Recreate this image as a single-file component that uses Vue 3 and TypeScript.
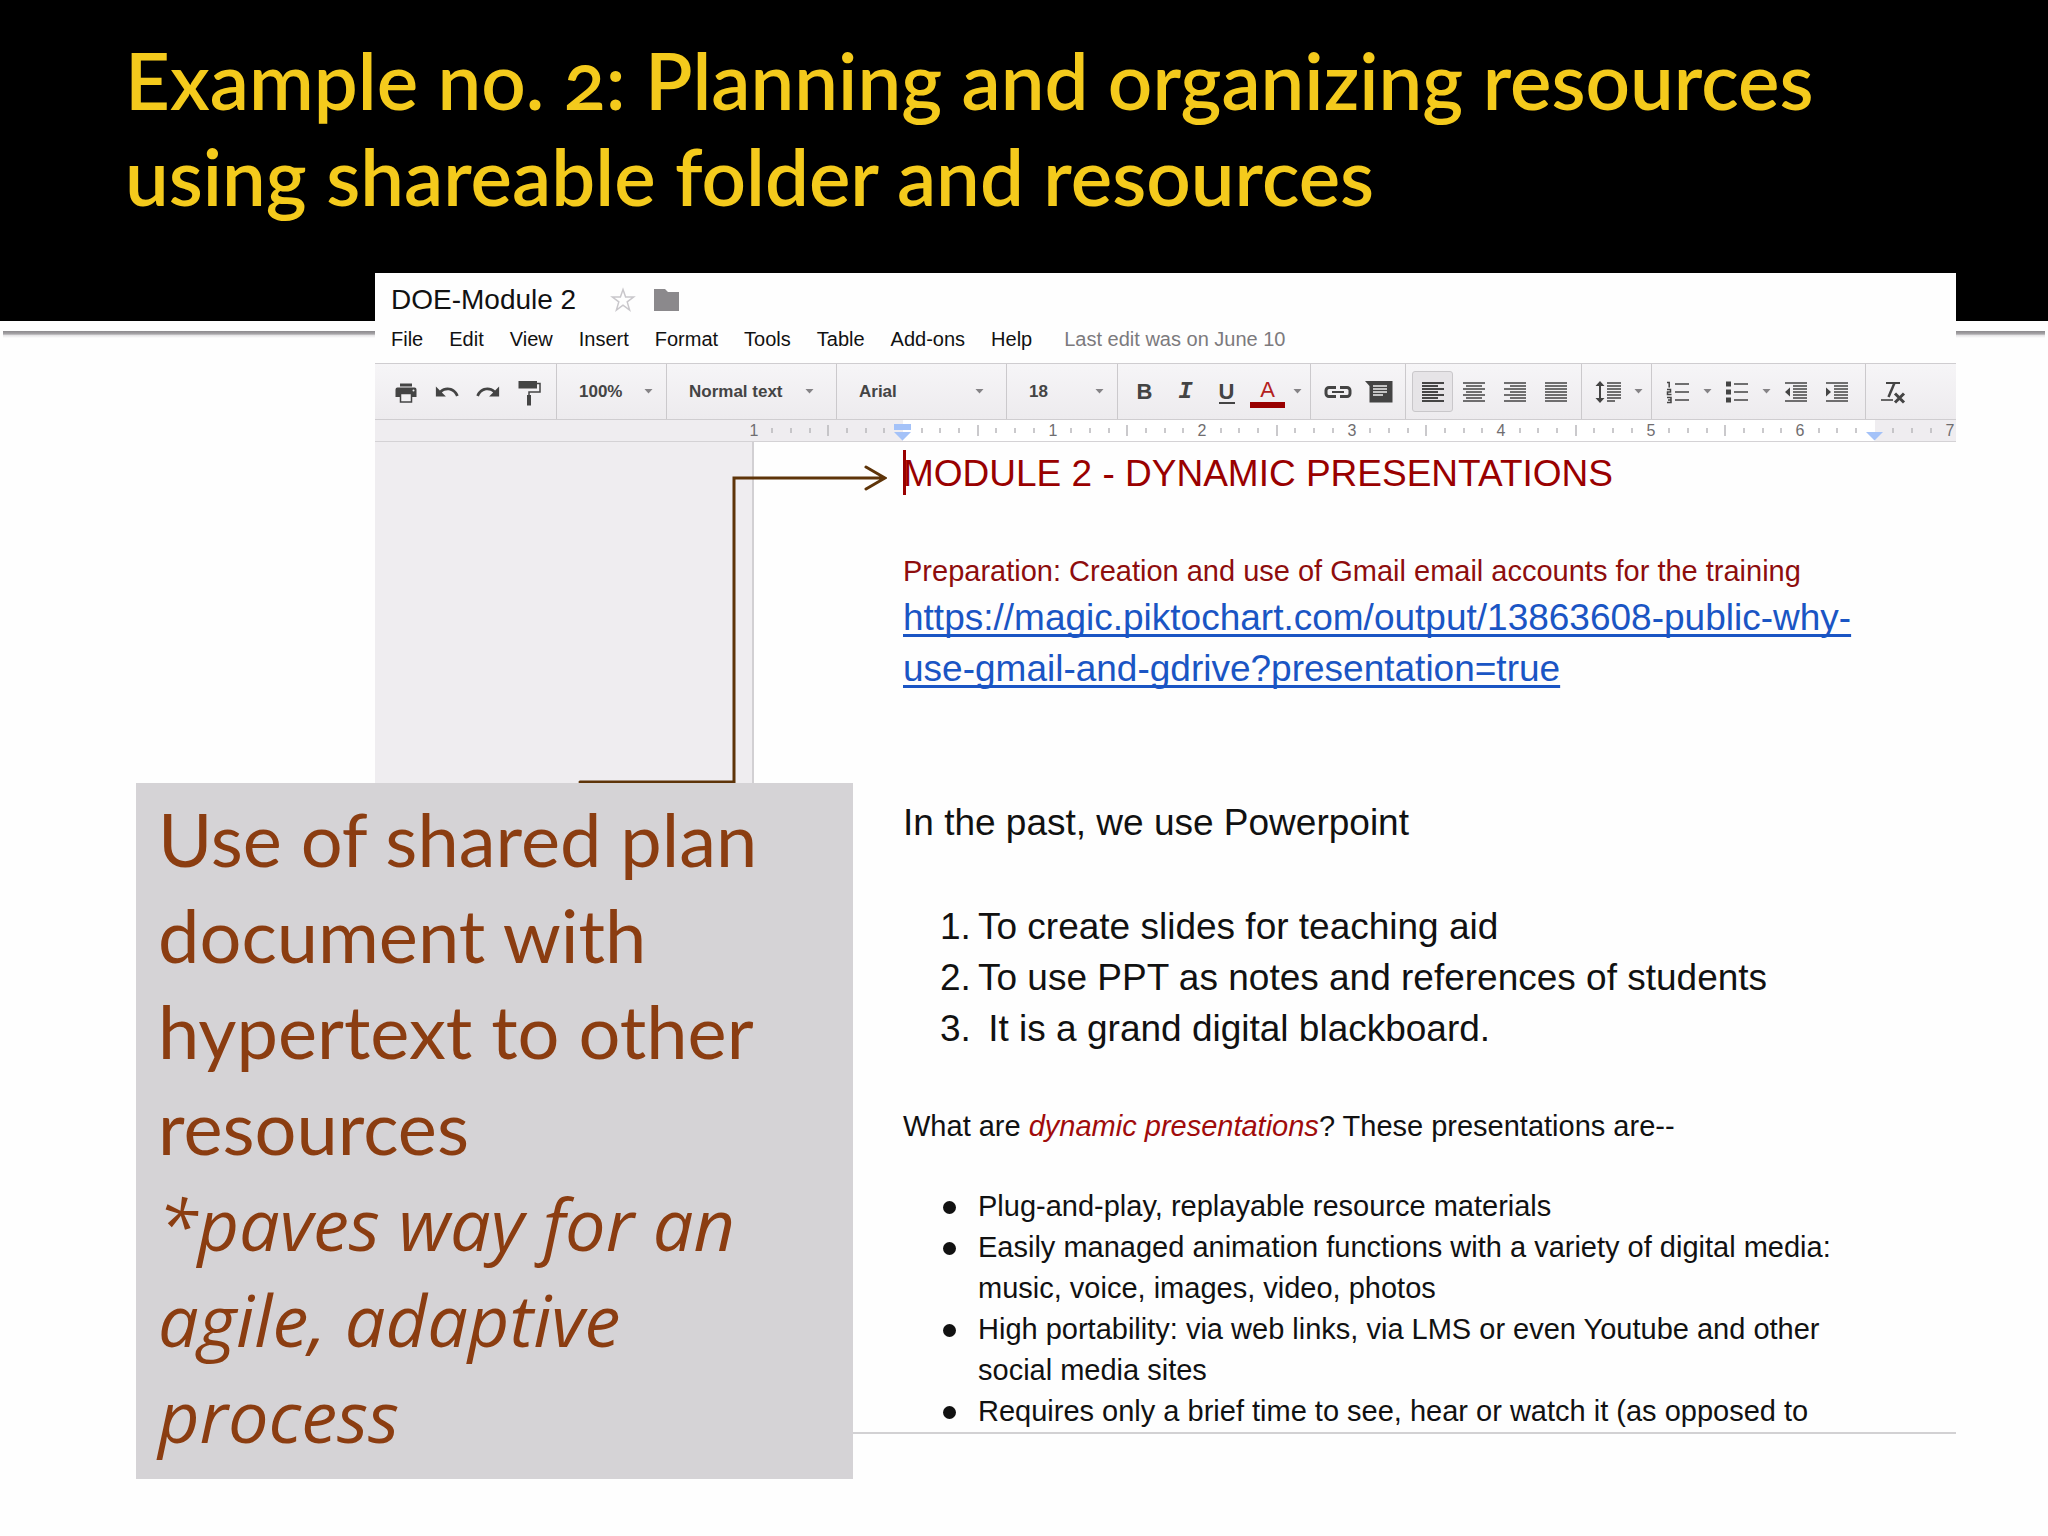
<script setup lang="ts">
const menus: string[] = ['File', 'Edit', 'View', 'Insert', 'Format', 'Tools', 'Table', 'Add-ons', 'Help']

interface Tick { x: number; kind: 'minor' | 'half' | 'label'; label: string }

// Ruler: one inch is 299/2 px wide, split in eighths; zero sits at the left text margin.
const zero = 528
const ticks: Tick[] = []
for (let i = -8; i <= 56; i++) {
  if (i === 0 || i === 52) continue
  const x = Math.round(zero + (i * 299) / 16)
  if (i % 8 === 0) ticks.push({ x, kind: 'label', label: String(Math.abs(i / 8)) })
  else if (i % 4 === 0) ticks.push({ x, kind: 'half', label: '' })
  else ticks.push({ x, kind: 'minor', label: '' })
}

type Align = 'left' | 'center' | 'right' | 'justify'
const aligns: Align[] = ['left', 'center', 'right', 'justify']
function alignPath(kind: Align): string {
  return [0, 1, 2, 3, 4, 5, 6]
    .map((i) => {
      const y = 6 + i * 3
      const short = i % 2 === 1 && kind !== 'justify'
      if (!short) return `M4 ${y}H26`
      if (kind === 'left') return `M4 ${y}H20`
      if (kind === 'right') return `M10 ${y}H26`
      return `M7 ${y}H23`
    })
    .join('')
}

const steps: string[] = [
  'To create slides for teaching aid',
  'To use PPT as notes and references of students',
  '\u00a0It is a grand digital blackboard.',
]
const traits: string[] = [
  'Plug-and-play, replayable resource materials',
  'Easily managed animation functions with a variety of digital media: music, voice, images, video, photos',
  'High portability: via web links, via LMS or even Youtube and other social media sites',
  'Requires only a brief time to see, hear or watch it (as opposed to',
]
</script>

<template>
  <main class="slide">
    <header class="banner">
      <h1>Example no. 2: Planning and organizing resources using shareable folder and resources</h1>
    </header>
    <div class="rule"></div>

    <section class="doc">
      <div class="doc-title">
        <span>DOE-Module 2</span>
        <button type="button" class="plain star" aria-label="Star">
          <svg width="26" height="26" viewBox="0 0 26 26"><path d="M13 2.5l2.6 7.6h8l-6.4 4.8 2.4 8.2-6.600-4.900-6.600 4.900 2.400-8.200L2.400 10.100h8z" fill="none" stroke="#c9c7cb" stroke-width="1.500" /></svg>
        </button>
        <button type="button" class="plain" aria-label="Move to folder">
          <svg width="26" height="24" viewBox="0 0 26 24"><path d="M0 1h11l3 3h11v19H0z" fill="#8b898c" /></svg>
        </button>
      </div>

      <nav class="menu">
        <button v-for="m in menus" :key="m" type="button" class="plain">{{ m }}</button>
        <span class="edited">Last edit was on June 10</span>
      </nav>

      <div class="toolbar">
        <div class="group history">
          <button type="button" class="tool" aria-label="Print">
            <svg viewBox="0 0 30 30"><path d="M9 6.500h12v3H9zM6.500 10.500h17a2 2 0 0 1 2 2v7.500h-21v-7.500a2 2 0 0 1 2-2z" fill="#444" /><path d="M9.500 16.500h11v8.500h-11z" fill="#f2f1f3" stroke="#444" stroke-width="1.500" /><circle cx="22.500" cy="13.500" r="1" fill="#eee" /></svg>
          </button>
          <button type="button" class="tool" aria-label="Undo">
            <svg viewBox="-1.500 -1.500 27 27"><path fill="#444" d="M12.500 8c-2.650 0-5.050.990-6.900 2.600L2 7v9h9l-3.620-3.620c1.390-1.160 3.160-1.880 5.120-1.880 3.540 0 6.550 2.310 7.600 5.500l2.370-.780C21.080 11.030 17.150 8 12.500 8z" /></svg>
          </button>
          <button type="button" class="tool" aria-label="Redo">
            <svg viewBox="-1.500 -1.500 27 27"><path fill="#444" d="M18.400 10.600C16.550 8.990 14.150 8 11.500 8c-4.650 0-8.580 3.030-9.960 7.220L3.900 16c1.050-3.190 4.050-5.500 7.600-5.500 1.950 0 3.730.720 5.120 1.880L13 16h9V7l-3.600 3.600z" /></svg>
          </button>
          <button type="button" class="tool" aria-label="Paint format">
            <svg viewBox="0 0 30 30"><path d="M4.500 4h18.500v7.500H4.500zM13 18h4v10.500h-4z" fill="#444" /><path d="M23 6.500h3v8.500H15v3" fill="none" stroke="#444" stroke-width="1.500" /></svg>
          </button>
        </div>

        <label class="group pick zoom">
          <select aria-label="Zoom"><option>100%</option></select>
          <svg class="caret" viewBox="0 0 8 5"><path d="M0 0h8L4 4.500z" /></svg>
        </label>
        <label class="group pick style">
          <select aria-label="Styles"><option>Normal text</option></select>
          <svg class="caret" viewBox="0 0 8 5"><path d="M0 0h8L4 4.500z" /></svg>
        </label>
        <label class="group pick font">
          <select aria-label="Font"><option>Arial</option></select>
          <svg class="caret" viewBox="0 0 8 5"><path d="M0 0h8L4 4.500z" /></svg>
        </label>
        <label class="group pick size">
          <select aria-label="Font size"><option>18</option></select>
          <svg class="caret" viewBox="0 0 8 5"><path d="M0 0h8L4 4.500z" /></svg>
        </label>

        <div class="group format">
          <button type="button" class="tool glyph bold">B</button>
          <button type="button" class="tool glyph italic">I</button>
          <button type="button" class="tool glyph underline"><span>U</span></button>
          <button type="button" class="tool glyph color"><span>A</span></button>
          <button type="button" class="more" aria-label="Text color options"><svg class="caret" viewBox="0 0 8 5"><path d="M0 0h8L4 4.500z" /></svg></button>
        </div>

        <div class="group insert">
          <button type="button" class="tool" aria-label="Insert link">
            <svg viewBox="0 0 30 30"><path d="M13 10.500H6a3 3 0 0 0-3 3v3a3 3 0 0 0 3 3h7M17 10.500h7a3 3 0 0 1 3 3v3a3 3 0 0 1-3 3h-7" fill="none" stroke="#444" stroke-width="3" /><path d="M9 15h12" stroke="#444" stroke-width="2" /></svg>
          </button>
          <button type="button" class="tool" aria-label="Add comment">
            <svg viewBox="0 0 30 30"><path d="M1 4h27.500v21.500h-23V9z" fill="#444" /><path d="M9 9h14M9 12h14M9 15h14M9 18h10" stroke="#eee" stroke-width="1.500" /></svg>
          </button>
        </div>

        <div class="group align">
          <button v-for="a in aligns" :key="a" type="button" class="tool" :class="{ active: a === 'left' }" :aria-label="'Align ' + a">
            <svg viewBox="0 0 30 30"><path :d="alignPath(a)" :stroke="a === 'left' ? '#111' : '#444'" stroke-width="1.600" /></svg>
          </button>
        </div>

        <div class="group spacing">
          <button type="button" class="tool" aria-label="Line spacing">
            <svg viewBox="0 0 30 30"><path d="M13 6h14M13 9h14M13 12h14M13 15h14M13 18h14M13 21h14M13 24h8" stroke="#444" stroke-width="1.600" /><path d="M6 7v17" stroke="#444" stroke-width="2" /><path d="M6 4l4.500 5h-9zM6 26l4.500-5h-9z" fill="#444" /></svg>
          </button>
          <button type="button" class="more" aria-label="Line spacing options"><svg class="caret" viewBox="0 0 8 5"><path d="M0 0h8L4 4.500z" /></svg></button>
        </div>

        <div class="group lists">
          <button type="button" class="tool" aria-label="Numbered list">
            <svg viewBox="0 0 30 30"><path d="M12 7h14M12 15h14M12 23h14" stroke="#444" stroke-width="1.600" /><path d="M4 5.500h2.200v5M4 12.500h3.500v2.500h-3v2.500h4M4 20.500h4v5H4M5 23h3" fill="none" stroke="#444" stroke-width="1.500" /></svg>
          </button>
          <button type="button" class="more" aria-label="Numbered list options"><svg class="caret" viewBox="0 0 8 5"><path d="M0 0h8L4 4.500z" /></svg></button>
          <button type="button" class="tool" aria-label="Bulleted list">
            <svg viewBox="0 0 30 30"><path d="M12 7h14M12 15h14M12 23h14" stroke="#444" stroke-width="1.600" /><path d="M4 4.500h5v5H4zM4 12.500h5v5H4zM4 20.500h5v5H4z" fill="#444" /></svg>
          </button>
          <button type="button" class="more" aria-label="Bulleted list options"><svg class="caret" viewBox="0 0 8 5"><path d="M0 0h8L4 4.500z" /></svg></button>
          <button type="button" class="tool" aria-label="Decrease indent">
            <svg viewBox="0 0 30 30"><path d="M4 6h22M12 9h14M12 12h14M12 15h14M12 18h14M12 21h14M4 24h22" stroke="#444" stroke-width="1.600" /><path d="M9 10.500v9L4 15z" fill="#444" /></svg>
          </button>
          <button type="button" class="tool" aria-label="Increase indent">
            <svg viewBox="0 0 30 30"><path d="M4 6h22M12 9h14M12 12h14M12 15h14M12 18h14M12 21h14M4 24h22" stroke="#444" stroke-width="1.600" /><path d="M4 10.500v9L9 15z" fill="#444" /></svg>
          </button>
        </div>

        <div class="group clear">
          <button type="button" class="tool" aria-label="Clear formatting">
            <svg viewBox="0 0 30 30"><path d="M8 6h14" stroke="#444" stroke-width="2" /><path d="M16.500 6L10.500 20" stroke="#444" stroke-width="2.500" /><path d="M3 23h12" stroke="#444" stroke-width="1.600" /><path d="M17 16.500l9 9M26 16.500l-9 9" stroke="#444" stroke-width="3" /></svg>
          </button>
        </div>
      </div>

      <div class="ruler">
        <svg width="1581" height="22" viewBox="0 0 1581 22">
          <rect x="528" y="0" width="972" height="22" fill="#fff" />
          <template v-for="t in ticks" :key="t.x">
            <text v-if="t.kind === 'label'" :x="t.x" y="16" text-anchor="middle">{{ t.label }}</text>
            <path v-else :d="t.kind === 'half' ? `M${t.x} 5v11` : `M${t.x} 8v5`" stroke="#b9b7bb" stroke-width="1.500" />
          </template>
          <path d="M519 4h17v6h-17zM519 12h17l-8.500 8.500z" fill="#a4c2f8" />
          <path d="M1491 12h17l-8.500 8.500z" fill="#a4c2f8" />
        </svg>
      </div>

      <div class="canvas">
        <article class="page">
          <h2>MODULE 2 - DYNAMIC PRESENTATIONS</h2>
          <p class="prep">Preparation: Creation and use of Gmail email accounts for the training</p>
          <p class="large link"><a href="#">https://magic.piktochart.com/output/13863608-public-why-<wbr />use-gmail-and-gdrive?presentation=true</a></p>
          <p class="large past">In the past, we use Powerpoint</p>
          <ol>
            <li v-for="s in steps" :key="s">{{ s }}</li>
          </ol>
          <p class="what">What are <em>dynamic presentations</em>? These presentations are--</p>
          <ul>
            <li v-for="t in traits" :key="t">{{ t }}</li>
          </ul>
        </article>
      </div>
    </section>

    <svg class="arrow" width="312" height="324" viewBox="0 0 312 324" aria-hidden="true">
      <path d="M5 322H159V18H309M291 7L310 18L291 29" fill="none" stroke="#5e3409" stroke-width="3" stroke-linecap="round" />
    </svg>

    <aside class="callout">
      <p>Use of shared plan document with hypertext to other resources</p>
      <p class="note">*paves way for an agile, adaptive process</p>
    </aside>
  </main>
</template>

<style>
body {
  margin: 0;
  background: #fefefe;
}
</style>

<style scoped>
.slide {
  position: relative;
  min-height: 100vh;
  overflow: hidden;
  background: #fefefe;
  font-family: "Liberation Sans", Arial, sans-serif;
  color: #111;
}
h1, h2, p, ol, ul {
  margin: 0;
  padding: 0;
  font-weight: 400;
}
.banner {
  box-sizing: border-box;
  height: 321px;
  padding: 32px 125px 0;
  background: #000;
}
.banner h1 {
  font: 600 78px/96px Lato, "Open Sans", sans-serif;
  font-variant-numeric: oldstyle-nums;
  color: #f4ca1c;
}
.rule {
  height: 7px;
  margin: 10px 3px 0;
  background: linear-gradient(#8c8a8d, #a9a7aa 45%, #e4e3e5 60%, #fefefe);
}
.doc {
  position: relative;
  margin: -65px 92px 0 375px;
  background: #fefefe;
}
button, select {
  margin: 0;
  padding: 0;
  border: 0;
  background: none;
  color: inherit;
  font: inherit;
}
.doc-title {
  display: flex;
  align-items: center;
  height: 50px;
  padding: 2px 16px 0;
  font-size: 28px;
  line-height: 32px;
}
.doc-title .plain {
  display: flex;
}
.doc-title .star {
  margin: 0 18px 0 34px;
}
.menu {
  display: flex;
  align-items: center;
  gap: 26px;
  height: 38px;
  padding: 0 16px 10px;
  box-sizing: border-box;
  font-size: 20px;
  line-height: 24px;
}
.edited {
  margin-left: 6px;
  color: #7c7a7d;
}
.toolbar {
  display: flex;
  height: 55px;
  border-top: 1px solid #cfcdd0;
  border-bottom: 1px solid #cfcdd0;
  background: linear-gradient(#f6f5f7, #edebee);
  color: #444;
}
.group {
  display: flex;
  align-items: center;
  box-sizing: border-box;
  flex: none;
  border-right: 1px solid #cbc9cc;
  padding-left: 6px;
}
.history { width: 182px; padding-left: 10px; }
.pick { padding: 0 22px; }
.pick select {
  flex: 1;
  min-width: 0;
  appearance: none;
  font: 700 17px/24px "Liberation Sans", Arial, sans-serif;
}
.zoom { width: 110px; padding-right: 13px; }
.style { width: 170px; }
.font { width: 170px; }
.size { width: 111px; padding-right: 13px; }
.format { width: 193px; }
.insert { width: 95px; }
.align { width: 176px; }
.spacing { width: 70px; }
.lists { width: 214px; padding-left: 5px; }
.clear { border-right: 0; }
.caret {
  flex: none;
  width: 9px;
  height: 5px;
  fill: #858386;
}
.tool {
  display: flex;
  flex: none;
  align-items: center;
  justify-content: center;
  box-sizing: border-box;
  width: 41px;
  height: 41px;
}
.tool svg {
  width: 30px;
  height: 30px;
  flex: none;
}
.more {
  display: flex;
  flex: none;
  align-items: center;
  justify-content: center;
  width: 18px;
  height: 41px;
}
.active {
  border: 1px solid #c9c7ca;
  border-radius: 3px;
  background: #e6e4e7;
}
.glyph {
  font-size: 22px;
  line-height: 24px;
}
.bold { font-weight: 700; }
.italic {
  font-family: "Liberation Mono", monospace;
  font-style: italic;
  font-weight: 700;
  font-size: 24px;
}
.underline { font-weight: 700; }
.underline span {
  width: 16px;
  border-bottom: 2px solid #444;
  line-height: 20px;
}
.color { color: #b3201d; }
.color span {
  width: 35px;
  border-bottom: 6px solid #900;
  line-height: 24px;
}
.color, .underline { padding-top: 2px; }
.ruler {
  height: 21px;
  overflow: hidden;
  border-bottom: 1px solid #d4d2d5;
  background: #efedf0;
}
.ruler svg { display: block; }
.ruler text {
  fill: #6f6d70;
  font-size: 16px;
}
.canvas {
  padding-left: 377px;
  border-bottom: 2px solid #d2d1d3;
  background: #efedf0;
}
.page {
  padding: 6px 60px 0 149px;
  border-left: 2px solid #d2d0d3;
  background: #fefefe;
}
h2, .large, ol {
  font-size: 37px;
  line-height: 51px;
}
.prep, .what, ul {
  font-size: 29px;
  line-height: 41px;
}
h2 {
  position: relative;
  margin-bottom: 52px;
  color: #900;
}
h2::before {
  content: "";
  position: absolute;
  left: 0;
  top: 2px;
  width: 3px;
  height: 45px;
  background: #900;
}
.prep { color: #8e0d0d; }
.link a {
  color: #1a55c4;
  text-decoration-thickness: 3px;
  text-underline-offset: 4px;
  text-decoration-skip-ink: none;
}
.past { margin: 103px 0 53px; }
ol, ul { list-style: none; }
ol { counter-reset: step; }
ol li {
  display: flex;
  padding-left: 37px;
}
ol li::before {
  counter-increment: step;
  content: counter(step) ".";
  flex: none;
  width: 38px;
}
.what { margin: 52px 0 39px; }
.what em { color: #a00b0b; }
ul li {
  display: flex;
  padding-left: 40px;
}
ul li::before {
  content: "";
  flex: none;
  width: 13px;
  height: 13px;
  margin: 15px 22px 0 0;
  border-radius: 50%;
  background: #111;
}
.arrow {
  position: absolute;
  left: 575px;
  top: 460px;
}
.callout {
  position: absolute;
  left: 136px;
  top: 783px;
  box-sizing: border-box;
  width: 35%;
  padding: 8px 22px 16px;
  background: #d5d3d6;
  color: #8b3d11;
  font: 400 74px/96px Lato, "Open Sans", sans-serif;
}
.note {
  font: italic 400 72px/96px "Open Sans", Lato, sans-serif;
}
</style>
